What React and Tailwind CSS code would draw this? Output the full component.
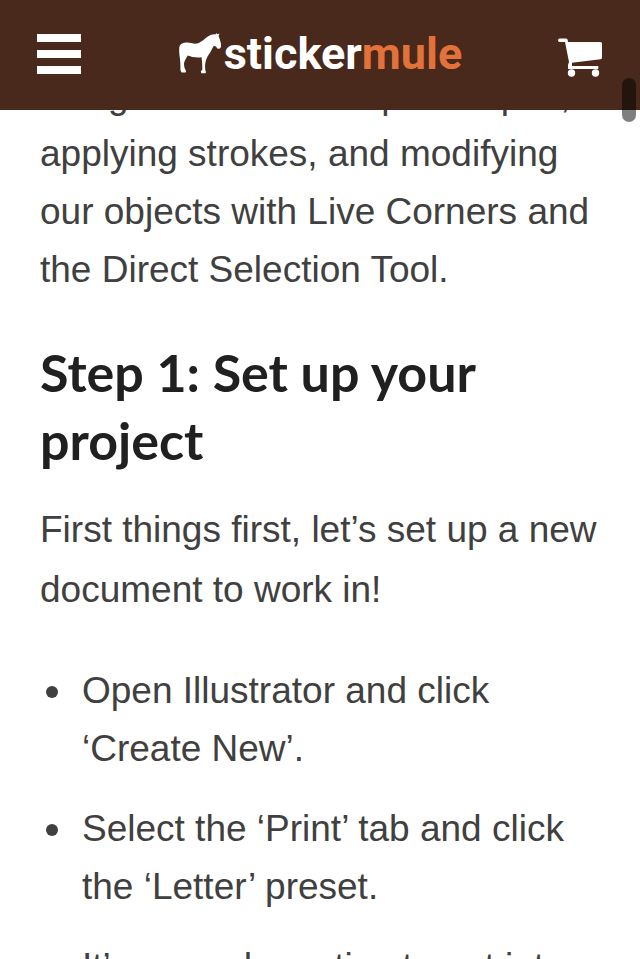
function Mule() {
  return (
    <svg viewBox="0 0 44 42" className="h-[42px] w-[44px] shrink-0 fill-white" aria-hidden="true">
      <path d="M1.200 15.500 C1.500 11.500 4 9.800 8 9.600 C12 9.200 15 11.200 19 10.600 C24 9.500 27 5 31.500 2.600 C34 1.400 36 1.500 38 1.300 L38.500 0 L39.500 1.200 L41.500 .6 L40.600 3 C41.500 5 42.300 8 42.900 10.500 C43.300 13 43.200 15 41.300 15.800 L39.200 15.500 C38.500 13.800 37.200 13.200 35.800 12.800 C34 15.500 32.800 19 30.800 21.600 C28.500 25 27.500 28 27.100 32 C27 35 27.200 37 28 39.300 L27.500 40.300 L23.500 40.300 L22.700 38.500 L24.300 36.800 C24.500 33 24 28.500 23.600 24.200 C18.500 25 14 24.200 9.800 22.600 C8.200 25.500 6.500 27.500 6 30.500 C6 33.500 6.500 35.500 8.200 38 L7.600 39.600 L3.600 39.600 L2.500 37.500 L2.300 30 C2.300 26 1 22 1.200 15.500 Z" />
    </svg>
  );
}

function Cart() {
  return (
    <svg viewBox="0 0 46 40" className="h-[40px] w-[46px] fill-white" aria-hidden="true">
      <path d="M2.500 .5 H9 Q10.500 .7 10.700 2 L11 4 H43.500 Q45 4 45 5.500 V19.500 Q45 21 43.500 21.200 L15 24.800 V28 H41.300 V31 H11 V27 L12 24 L8 4 H2.500 Q1 4 1 2.300 Q1 .5 2.500 .5 Z" />
      <circle cx="14.500" cy="35" r="3.700" />
      <circle cx="38.500" cy="35" r="3.700" />
    </svg>
  );
}

const steps = [
  "Open Illustrator and click ‘Create New’.",
  "Select the ‘Print’ tab and click the ‘Letter’ preset.",
  "It’s a good practice to get into the habit of naming your file.",
];

export default function App() {
  return (
    <div className="relative h-screen overflow-hidden bg-white font-['Liberation_Sans',sans-serif] text-[37px] leading-[58px] text-[#404040]">
      <header className="absolute inset-x-0 top-0 z-10 flex h-[110px] items-center justify-between bg-[#48291c] px-[37px] pb-[3px]">
        <button type="button" aria-label="Menu" className="flex w-11 flex-col gap-2">
          <span className="h-2 bg-white" />
          <span className="h-2 bg-white" />
          <span className="h-2 bg-white" />
        </button>
        <a href="#home" aria-label="Sticker Mule" className="flex items-center gap-0.5 pl-0.5 font-['Roboto',sans-serif] text-[45px] font-bold leading-none text-white">
          <Mule />
          <span>
            sticker<span className="text-[#e27239]">mule</span>
          </span>
        </a>
        <button type="button" aria-label="Cart" className="pt-2">
          <Cart />
        </button>
      </header>

      <main className="px-10 pt-[67px]">
        <p>using all kinds of simple shapes, applying strokes, and modifying our objects with Live Corners and the Direct Selection Tool.</p>
        <h2 className="mt-[39px] font-['Lato',sans-serif] text-[52px] font-bold leading-[68px] text-[#202020]">
          Step 1: Set up your project
        </h2>
        <p className="mt-[26px] leading-[60px]">First things first, let’s set up a new document to work in!</p>
        <ul className="mt-[42px] flex flex-col gap-[22px]">
          {steps.map((step) => (
            <li key={step} className="flex">
              <span className="mr-6 ml-1.5 mt-6 size-3 shrink-0 rounded-full bg-[#404040]" />
              <span>{step}</span>
            </li>
          ))}
        </ul>
      </main>

      <div className="absolute right-1 top-[78px] z-20 h-11 w-3.5 rounded-full bg-black/50" />
    </div>
  );
}
